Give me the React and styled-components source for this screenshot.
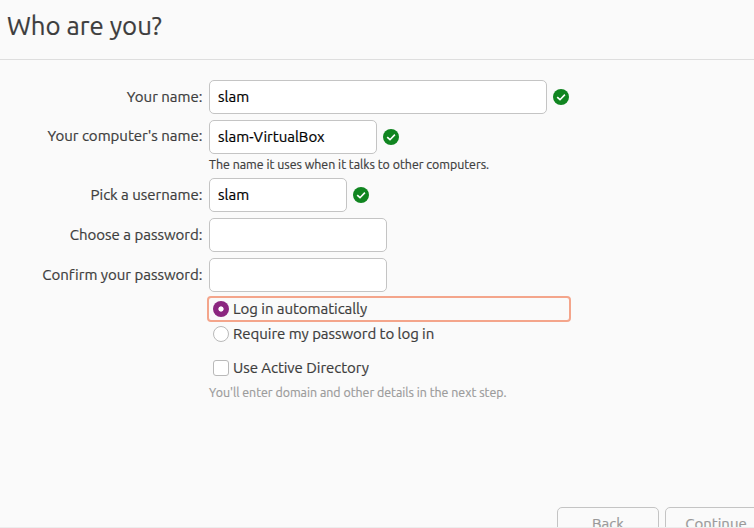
import React from 'react';
import styled, { createGlobalStyle } from 'styled-components';

const GlobalStyle = createGlobalStyle`
  * { box-sizing: border-box; }
  body { margin: 0; background: #fafafa; overflow: hidden; }
`;

const Window = styled.main`
  display: flex;
  flex-direction: column;
  width: 754px;
  height: 528px;
  overflow: hidden;
  background: #fafafa;
  border-bottom: 1px solid #ededed;
  color: #3d3d3d;
  font: 15px/20px Ubuntu, "Noto Sans", sans-serif;
  font-variant-ligatures: none;
  -webkit-text-stroke: 0.2px;
  white-space: nowrap;
`;

const Header = styled.header`
  height: 60px;
  flex: none;
  padding: 8px 7px 0;
  border-bottom: 1px solid #dedede;
`;

const Title = styled.h1`
  margin: 0;
  font-size: 25.8px;
  font-weight: 400;
  line-height: 36px;
`;

const Form = styled.form`
  display: flex;
  flex-direction: column;
  flex: none;
  height: 447px;
  padding-top: 20px;
`;

const Row = styled.div`
  display: grid;
  grid-template-columns: 203px auto 16px;
  column-gap: 6px;
  justify-content: start;
  align-items: center;
  height: 34px;
  margin-bottom: ${(p) => p.$gap ?? 6}px;
`;

const Label = styled.label`
  justify-self: end;
  padding-right: 0.5px;
  padding-bottom: ${(p) => p.$lift ?? 0}px;
`;

const Field = styled.input`
  width: ${(p) => p.$width}px;
  height: 34px;
  padding: 0 8px 1px;
  border: 1px solid #c4c4c4;
  border-radius: 5px;
  outline: none;
  background: #fff;
  color: #000;
  font: inherit;
`;

const Hint = styled.p`
  height: 24px;
  margin: 0 0 0 209px;
  font-size: 12.4px;
  line-height: ${(p) => (p.$muted ? 22 : 20)}px;
  color: ${(p) => (p.$muted ? '#9b9b9b' : '#3d3d3d')};
`;

const Option = styled.label`
  display: flex;
  align-items: center;
  gap: 4px;
  width: 364px;
  height: 26px;
  margin: ${(p) => p.$top ?? 0}px 0 0 207px;
  padding-left: 4px;
  border: 2px solid ${(p) => (p.$focused ? '#f4a58b' : 'transparent')};
  border-radius: 4px;
  letter-spacing: -0.04px;
`;

const Indicator = styled.span`
  flex: none;
  width: 16px;
  height: 16px;
  border: 1px solid #b9b9b9;
  border-radius: ${(p) => (p.$round ? '50%' : '3px')};
  background: ${(p) => (p.$checked ? 'radial-gradient(circle, #fff 2.2px, #8b267f 3px)' : '#fff')};
  ${(p) => p.$checked && 'border: 0;'}
`;

const Actions = styled.footer`
  display: flex;
  flex: none;
  gap: 6px;
  padding-left: 557px;
`;

const Button = styled.button`
  flex: none;
  width: 102px;
  height: 34px;
  padding: 0;
  border: 1px solid #c4c4c4;
  border-radius: 5px;
  background: #fafafa;
  color: #999;
  font: inherit;
`;

const Valid = () => (
  <svg width="16" height="16" viewBox="0 0 16 16" aria-label="Valid">
    <circle cx="8" cy="8" r="8" fill="#108520" />
    <path d="M4.2 8.1 7 10.7 11.9 5.6" fill="none" stroke="#fff" strokeWidth="1.6" />
  </svg>
);

const rows = [
  { id: 'name', label: 'Your name:', value: 'slam', width: 338, ok: true },
  { id: 'host', label: "Your computer's name:", value: 'slam-VirtualBox', width: 168, ok: true, gap: 0, lift: 2, hint: 'The name it uses when it talks to other computers.' },
  { id: 'user', label: 'Pick a username:', value: 'slam', width: 138, ok: true },
  { id: 'pass', label: 'Choose a password:', value: '', width: 178 },
  { id: 'confirm', label: 'Confirm your password:', value: '', width: 178, gap: 4 },
];

export default function App() {
  return (
    <>
      <GlobalStyle />
      <Window>
        <Header>
          <Title>Who are you?</Title>
        </Header>
        <Form>
          {rows.map((r) => (
            <React.Fragment key={r.id}>
              <Row $gap={r.gap}>
                <Label htmlFor={r.id} $lift={r.lift}>{r.label}</Label>
                <Field id={r.id} $width={r.width} defaultValue={r.value} />
                {r.ok && <Valid />}
              </Row>
              {r.hint && <Hint>{r.hint}</Hint>}
            </React.Fragment>
          ))}
          <Option $focused>
            <Indicator $round $checked />
            Log in automatically
          </Option>
          <Option $top={-1}>
            <Indicator $round />
            Require my password to log in
          </Option>
          <Option $top={8}>
            <Indicator />
            Use Active Directory
          </Option>
          <Hint $muted>You'll enter domain and other details in the next step.</Hint>
        </Form>
        <Actions>
          <Button>Back</Button>
          <Button>Continue</Button>
        </Actions>
      </Window>
    </>
  );
}
